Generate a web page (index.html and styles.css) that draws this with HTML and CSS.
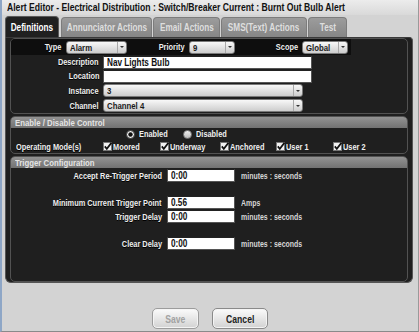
FILE: index.html
```html
<!DOCTYPE html>
<html>
<head>
<meta charset="utf-8">
<link rel="stylesheet" href="styles.css">
</head>
<body>
<div class="window">
  <div class="titlebar"><span class="nl">Alert Editor - Electrical Distribution : Switch/Breaker Current : Burnt Out Bulb Alert</span></div>
  <div class="tabs">
    <div class="tab active t-def"><span class="nc">Definitions</span></div>
    <div class="tab t-ann"><span class="nc">Annunciator Actions</span></div>
    <div class="tab t-email"><span class="nc">Email Actions</span></div>
    <div class="tab t-sms"><span class="nc">SMS(Text) Actions</span></div>
    <div class="tab t-test"><span class="nc">Test</span></div>
  </div>
  <div class="panel">
    <div class="box defs">
      <div class="row1">
        <div class="lab rl l-type"><span class="nr">Type</span></div>
        <div class="select s-type"><span class="val"><span class="nl">Alarm</span></span><span class="arr"><i></i></span></div>
        <div class="lab rl l-prio"><span class="nr">Priority</span></div>
        <div class="select s-prio"><span class="val"><span class="nl">9</span></span><span class="arr"><i></i></span></div>
        <div class="lab rl l-scope"><span class="nr">Scope</span></div>
        <div class="select s-scope"><span class="val"><span class="nl">Global</span></span><span class="arr"><i></i></span></div>
      </div>
      <div class="frow">
        <div class="lab rl flab"><span class="nr">Description</span></div>
        <div class="inp wide"><span class="nl">Nav Lights Bulb</span></div>
      </div>
      <div class="frow">
        <div class="lab rl flab"><span class="nr">Location</span></div>
        <div class="inp wide"></div>
      </div>
      <div class="frow tall">
        <div class="lab rl flab"><span class="nr">Instance</span></div>
        <div class="select s-wide"><span class="val"><span class="nl">3</span></span><span class="arr"><i></i></span></div>
      </div>
      <div class="frow tall">
        <div class="lab rl flab"><span class="nr">Channel</span></div>
        <div class="select s-wide"><span class="val"><span class="nl">Channel 4</span></span><span class="arr"><i></i></span></div>
      </div>
    </div>
    <div class="box control">
      <div class="hdr"><span class="nl">Enable / Disable Control</span></div>
      <div class="radios">
        <div class="opt o-en">
          <svg class="radio" width="9" height="9" viewBox="0 0 9 9"><circle cx="4.5" cy="4.5" r="4" fill="#f4f4f4" stroke="#333" stroke-width="1"/><circle cx="4.5" cy="4.5" r="2.2" fill="#111"/></svg>
          <span class="nl">Enabled</span>
        </div>
        <div class="opt">
          <svg class="radio" width="9" height="9" viewBox="0 0 9 9"><defs><linearGradient id="rg" x1="0" y1="0" x2="0" y2="1"><stop offset="0" stop-color="#f2f2f2"/><stop offset="1" stop-color="#b8b8b8"/></linearGradient></defs><circle cx="4.5" cy="4.5" r="4" fill="url(#rg)" stroke="#666" stroke-width="0.8"/></svg>
          <span class="nl">Disabled</span>
        </div>
      </div>
      <div class="modes">
        <div class="lab mlab"><span class="nl">Operating Mode(s)</span></div>
        <div class="chk c1"><svg width="9" height="9" viewBox="0 0 9 9"><rect x="0.5" y="0.5" width="8" height="8" fill="#f2f2f2" stroke="#777"/><path d="M1.8 4.4 L3.8 6.8 L8.6 0.6" fill="none" stroke="#111" stroke-width="1.7"/></svg><span class="nl">Moored</span></div>
        <div class="chk c2"><svg width="9" height="9" viewBox="0 0 9 9"><rect x="0.5" y="0.5" width="8" height="8" fill="#f2f2f2" stroke="#777"/><path d="M1.8 4.4 L3.8 6.8 L8.6 0.6" fill="none" stroke="#111" stroke-width="1.7"/></svg><span class="nl">Underway</span></div>
        <div class="chk c3"><svg width="9" height="9" viewBox="0 0 9 9"><rect x="0.5" y="0.5" width="8" height="8" fill="#f2f2f2" stroke="#777"/><path d="M1.8 4.4 L3.8 6.8 L8.6 0.6" fill="none" stroke="#111" stroke-width="1.7"/></svg><span class="nl">Anchored</span></div>
        <div class="chk c4"><svg width="9" height="9" viewBox="0 0 9 9"><rect x="0.5" y="0.5" width="8" height="8" fill="#f2f2f2" stroke="#777"/><path d="M1.8 4.4 L3.8 6.8 L8.6 0.6" fill="none" stroke="#111" stroke-width="1.7"/></svg><span class="nl">User 1</span></div>
        <div class="chk c5"><svg width="9" height="9" viewBox="0 0 9 9"><rect x="0.5" y="0.5" width="8" height="8" fill="#f2f2f2" stroke="#777"/><path d="M1.8 4.4 L3.8 6.8 L8.6 0.6" fill="none" stroke="#111" stroke-width="1.7"/></svg><span class="nl">User 2</span></div>
      </div>
    </div>
    <div class="box trigger">
      <div class="hdr"><span class="nl">Trigger Configuration</span></div>
      <div class="trow gap-s">
        <div class="lab rl tlab"><span class="nr">Accept Re-Trigger Period</span></div>
        <div class="inp short"><span class="nl">0:00</span></div>
        <div class="unit"><span class="nl">minutes : seconds</span></div>
      </div>
      <div class="trow gap-l">
        <div class="lab rl tlab"><span class="nr">Minimum Current Trigger Point</span></div>
        <div class="inp short"><span class="nl">0.56</span></div>
        <div class="unit"><span class="nl">Amps</span></div>
      </div>
      <div class="trow gap-s">
        <div class="lab rl tlab"><span class="nr">Trigger Delay</span></div>
        <div class="inp short"><span class="nl">0:00</span></div>
        <div class="unit"><span class="nl">minutes : seconds</span></div>
      </div>
      <div class="trow gap-l">
        <div class="lab rl tlab"><span class="nr">Clear Delay</span></div>
        <div class="inp short"><span class="nl">0:00</span></div>
        <div class="unit"><span class="nl">minutes : seconds</span></div>
      </div>
    </div>
  </div>
  <div class="buttons">
    <div class="btn save"><span class="nc">Save</span></div>
    <div class="btn cancel"><span class="nc">Cancel</span></div>
  </div>
</div>
</body>
</html>
```
FILE: styles.css
```css
* { box-sizing: border-box; }
html, body { margin: 0; padding: 0; }
body {
  width: 419px;
  height: 332px;
  overflow: hidden;
  font-family: "Liberation Sans", Arial, sans-serif;
  font-weight: bold;
  background: #d3d3d3;
}

/* condensed text (the UI font is a narrow face) */
.nl, .nr, .nc {
  display: inline-block;
  white-space: nowrap;
  transform: scaleX(0.82);
}
.nl { transform-origin: left center; }
.nr { transform-origin: right center; }
.nc { transform-origin: center center; }

.window {
  width: 419px;
  height: 332px;
  background: #d3d3d3;
  border-left: 2px solid #8ea6c6;
  border-right: 1px solid #9a9a9a;
  border-bottom: 1px solid #8a8a8a;
  display: flex;
  flex-direction: column;
}
.titlebar {
  height: 15px;
  line-height: 15px;
  padding-left: 5px;
  font-size: 10.5px;
  color: #111;
  background: linear-gradient(#ececec, #d9d9d9);
  white-space: nowrap;
  overflow: hidden;
}
.tabs {
  height: 22px;
  display: flex;
  align-items: flex-end;
  padding-left: 3px;
}
.tab {
  height: 20px;
  margin-right: 1px;
  background: linear-gradient(#9c9c9c, #868686);
  color: #dedede;
  font-size: 10px;
  border: 1px solid #7c7c7c;
  border-bottom: none;
  border-radius: 4px 4px 0 0;
  display: flex;
  align-items: center;
  justify-content: center;
  white-space: nowrap;
}
.tab.active {
  height: 21px;
  background: #202020;
  color: #ffffff;
  border-color: #5a5a5a;
}
.t-def { width: 54px; margin-right: 2px; }
.t-ann { width: 91px; }
.t-email { width: 67px; }
.t-sms { width: 86px; }
.t-test { width: 39px; }

.panel {
  margin-left: 3px;
  width: 408px;
  height: 246px;
  background: #1f1f1f;
  border: 1px solid #555;
  border-top-color: #3a3a3a;
  border-radius: 0 4px 6px 6px;
  padding: 0 4px;
  display: flex;
  flex-direction: column;
  gap: 2px;
}
.box {
  border: 1px solid #525252;
  border-radius: 5px;
  display: flex;
  flex-direction: column;
}
.defs { height: 76px; }
.control { height: 38px; }
.trigger { flex: 1; }

.lab {
  font-size: 9px;
  color: #efefef;
  text-shadow: 0 1px 0 #000;
  white-space: nowrap;
}
.rl { text-align: right; }
.row1 {
  height: 16px;
  width: 340px;
  background: #0e0e0e;
  border-radius: 4px 0 0 0;
  display: flex;
  align-items: center;
}
.l-type { width: 50px; }
.l-prio { width: 58px; }
.l-scope { width: 63px; }
.s-type { width: 61px; margin-left: 5px; }
.s-prio { width: 46px; margin-left: 4px; }
.s-scope { width: 46px; margin-left: 4px; }

.select {
  height: 13px;
  display: flex;
  border: 1px solid #7a7a7a;
  border-radius: 3px;
  background: linear-gradient(#f8f8f8, #cdcdcd);
  color: #1a1a1a;
  font-size: 9.5px;
  line-height: 11px;
  white-space: nowrap;
}
.select .val { flex: 1; padding-left: 3px; }
.select .arr {
  width: 9px;
  border-left: 1px solid #a8a8a8;
  display: flex;
  align-items: center;
  justify-content: center;
}
.select .arr i {
  width: 0;
  height: 0;
  border-left: 2px solid transparent;
  border-right: 2px solid transparent;
  border-top: 2px solid #333;
}
.s-wide { width: 200px; }

.frow {
  height: 14px;
  display: flex;
  align-items: center;
}
.frow.tall { height: 15px; }
.flab { width: 88px; margin-right: 4px; }
.inp {
  height: 13px;
  background: #fff;
  border: 1px solid #555;
  border-top-color: #222;
  color: #111;
  font-size: 10px;
  line-height: 11px;
  padding-left: 3px;
  white-space: nowrap;
}
.wide { width: 209px; }

.hdr {
  height: 11px;
  line-height: 11px;
  padding-left: 4px;
  font-size: 9.5px;
  color: #e4e4e4;
  background: linear-gradient(#939393, #727272);
  border-radius: 4px 4px 0 0;
  white-space: nowrap;
}
.radios {
  height: 12px;
  display: flex;
  align-items: center;
  padding-left: 115px;
}
.opt {
  display: flex;
  align-items: center;
  font-size: 9px;
  color: #efefef;
}
.opt .nl { margin-left: 4px; }
.o-en { width: 57px; }
.radio { display: block; }

.modes {
  height: 13px;
  display: flex;
  align-items: center;
}
.mlab { width: 92px; padding-left: 5px; }
.chk {
  display: flex;
  align-items: center;
  font-size: 9px;
  color: #efefef;
  white-space: nowrap;
}
.chk svg { display: block; }
.chk .nl { margin-left: 1px; }
.c1 { width: 57px; }
.c2 { width: 60px; }
.c3 { width: 56px; }
.c4 { width: 57px; }

.trow {
  height: 13px;
  display: flex;
  align-items: center;
}
.gap-s { margin-top: 1px; }
.gap-l { margin-top: 14px; }
.tlab { width: 151px; margin-right: 5px; }
.short { width: 68px; margin-right: 6px; }
.unit {
  font-size: 8.5px;
  color: #d6d6d6;
  white-space: nowrap;
}

.buttons {
  flex: 1;
  display: flex;
  justify-content: center;
  align-items: flex-start;
  padding-top: 25px;
  gap: 13px;
}
.btn {
  height: 21px;
  border: 1px solid #9c9c9c;
  border-radius: 5px;
  background: linear-gradient(#fbfbfb, #d2d2d2);
  font-size: 10.5px;
  display: flex;
  align-items: center;
  justify-content: center;
  box-shadow: inset 0 0 0 1px #f4f4f4;
}
.save { width: 47px; color: #a2a2a2; }
.cancel { width: 56px; color: #222; border-color: #8a8a8a; }
```
